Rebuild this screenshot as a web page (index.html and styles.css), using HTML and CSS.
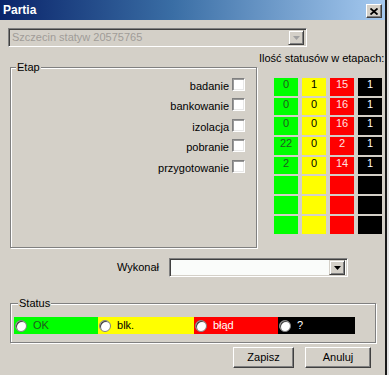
FILE: index.html
```html
<!DOCTYPE html>
<html lang="pl">
<head>
<meta charset="utf-8">
<title>Partia</title>
<link rel="stylesheet" href="styles.css">
</head>
<body>
<div class="screen">
  <div class="dialog">
    <div class="titlebar">
      <span class="title">Partia</span>
      <div class="close">
        <svg width="8" height="7" viewBox="0 0 8 7"><path d="M0.5 0.5 L7.5 6.5 M7.5 0.5 L0.5 6.5" stroke="#000" stroke-width="1.8"/></svg>
      </div>
    </div>
    <div class="content">
      <div class="combo combo-top disabled">
        <span class="combo-text">Szczecin statyw 20575765</span>
        <div class="drop"><svg width="7" height="4" viewBox="0 0 7 4"><path d="M0 0 H7 L3.5 4 Z" fill="#a0a0a0"/></svg></div>
      </div>

      <div class="main">
        <div class="group etap">
          <div class="legend">Etap</div>
          <div class="checks">
            <div class="check-row"><span class="check-label">badanie</span><span class="checkbox"></span></div>
            <div class="check-row"><span class="check-label">bankowanie</span><span class="checkbox"></span></div>
            <div class="check-row"><span class="check-label">izolacja</span><span class="checkbox"></span></div>
            <div class="check-row"><span class="check-label">pobranie</span><span class="checkbox"></span></div>
            <div class="check-row"><span class="check-label">przygotowanie</span><span class="checkbox"></span></div>
          </div>
        </div>
        <div class="right">
          <div class="counts-label">Ilość statusów w etapach:</div>
          <div class="counts">
            <div class="cell g">0</div><div class="cell y">1</div><div class="cell r">15</div><div class="cell k">1</div>
            <div class="cell g">0</div><div class="cell y">0</div><div class="cell r">16</div><div class="cell k">1</div>
            <div class="cell g">0</div><div class="cell y">0</div><div class="cell r">16</div><div class="cell k">1</div>
            <div class="cell g">22</div><div class="cell y">0</div><div class="cell r">2</div><div class="cell k">1</div>
            <div class="cell g">2</div><div class="cell y">0</div><div class="cell r">14</div><div class="cell k">1</div>
            <div class="cell g"></div><div class="cell y"></div><div class="cell r"></div><div class="cell k"></div>
            <div class="cell g"></div><div class="cell y"></div><div class="cell r"></div><div class="cell k"></div>
            <div class="cell g"></div><div class="cell y"></div><div class="cell r"></div><div class="cell k"></div>
          </div>
        </div>
      </div>

      <div class="wyk-row">
        <span class="wyk-label">Wykonał</span>
        <div class="combo combo-wyk">
          <span class="combo-text"></span>
          <div class="drop"><svg width="7" height="4" viewBox="0 0 7 4"><path d="M0 0 H7 L3.5 4 Z" fill="#000"/></svg></div>
        </div>
      </div>

      <div class="group status">
        <div class="legend">Status</div>
        <div class="status-bar">
          <div class="seg seg-ok"><span class="radio"></span><span>OK</span></div>
          <div class="seg seg-blk"><span class="radio"></span><span>blk.</span></div>
          <div class="seg seg-err"><span class="radio"></span><span>błąd</span></div>
          <div class="seg seg-unk"><span class="radio"></span><span>?</span></div>
        </div>
      </div>

      <div class="buttons">
        <div class="btn btn-save">Zapisz</div>
        <div class="btn btn-cancel">Anuluj</div>
      </div>
    </div>
  </div>
  <div class="edge"></div>
</div>
</body>
</html>
```

FILE: styles.css
```css
html, body {
  margin: 0;
  padding: 0;
}
body {
  font-family: "Liberation Sans", Arial, sans-serif;
  font-size: 11px;
  line-height: 13px;
  color: #000;
  background: #d4d0c8;
}
.screen {
  display: flex;
  width: 389px;
  height: 375px;
  overflow: hidden;
}
.dialog {
  width: 385px;
  height: 375px;
  background: #d4d0c8;
  flex: none;
}
.edge {
  flex: 1;
  border-left: 2px solid #1a1a1a;
  background: #e4e4e4;
}

/* title bar */
.titlebar {
  height: 20px;
  display: flex;
  align-items: center;
  justify-content: space-between;
  padding: 0 3px 0 3px;
  background: linear-gradient(to right, #0a246a 0%, #3a6ea5 45%, #a6caf0 100%);
}
.title {
  color: #fff;
  font-weight: bold;
  font-size: 12px;
  line-height: 14px;
}
.close {
  width: 14px;
  height: 12px;
  margin-top: 2px;
  background: #d4d0c8;
  border: 1px solid;
  border-color: #fff #404040 #404040 #fff;
  box-shadow: inset -1px -1px 0 #808080;
  display: flex;
  align-items: center;
  justify-content: center;
}
.close svg { display: block; }

.content {
  padding: 8px 0 0 8px;
}

/* combos */
.combo {
  box-sizing: border-box;
  height: 19px;
  border: 1px solid;
  border-color: #808080 #fff #fff #808080;
  box-shadow: inset 1px 1px 0 #404040, inset -1px -1px 0 #d4d0c8;
  display: flex;
  align-items: center;
  padding: 0 2px 0 3px;
}
.combo-text {
  flex: 1;
}
.combo.disabled {
  background: #d4d0c8;
  color: #a09c98;
}
.combo-top {
  width: 299px;
}
.combo-wyk {
  width: 179px;
  background: #fafcfa;
}
.drop {
  box-sizing: border-box;
  width: 16px;
  height: 15px;
  background: #d4d0c8;
  border: 1px solid;
  border-color: #d4d0c8 #404040 #404040 #d4d0c8;
  box-shadow: inset 1px 1px 0 #fff, inset -1px -1px 0 #808080;
  display: flex;
  align-items: center;
  justify-content: center;
}
.drop svg { display: block; }

/* main row */
.main {
  display: flex;
  margin-top: 5px;
}
.group {
  box-sizing: border-box;
  border: 1px solid #808080;
  box-shadow: inset 1px 1px 0 #fff, 1px 1px 0 #fff;
}
.legend {
  width: fit-content;
  margin-top: -7px;
  padding: 0 1px;
  background: #d4d0c8;
  line-height: 13px;
}
.etap {
  width: 247px;
  height: 181px;
  margin: 15px 0 0 2px;
}
.etap .legend {
  margin-left: 5px;
}
.checks {
  display: flex;
  flex-direction: column;
  align-items: flex-end;
  margin-right: 11px;
}
.check-row {
  height: 20.5px;
  display: flex;
  align-items: center;
  gap: 3px;
}
.check-label {
  margin-top: 4px;
}
.checkbox {
  box-sizing: border-box;
  width: 13px;
  height: 13px;
  background: #fff;
  border: 1px solid;
  border-color: #808080 #fff #fff #808080;
  box-shadow: inset 1px 1px 0 #9a9a9a, inset -1px -1px 0 #e8e8e8;
}

.right {
  margin-left: 2px;
}
.counts-label {
  white-space: nowrap;
}
.counts {
  margin: 13px 0 0 15px;
  display: grid;
  grid-template-columns: repeat(4, 24px);
  grid-template-rows: repeat(8, 17.7px);
  column-gap: 4px;
  row-gap: 2px;
}
.cell {
  text-align: center;
  line-height: 13px;
}
.g { background: #00ff00; color: #1f5a1f; }
.y { background: #ffff00; color: #000; }
.r { background: #ff0000; color: #ffe0e0; }
.k { background: #000; color: #fff; }

/* wykonal */
.wyk-row {
  display: flex;
  align-items: center;
  margin-top: 10px;
}
.wyk-label {
  width: 151px;
  text-align: right;
  margin-right: 10px;
}

/* status */
.status {
  width: 366px;
  margin: 26px 0 0 2px;
}
.status .legend {
  margin-left: 7px;
}
.status-bar {
  display: flex;
  height: 17px;
  margin: 7px 20px 8px 3px;
}
.seg {
  display: flex;
  align-items: center;
  padding-left: 1px;
  gap: 6px;
}
.seg-ok { width: 84px; background: #00ff00; color: #1f5a1f; }
.seg-blk { width: 96px; background: #ffff00; color: #000; }
.seg-err { width: 84px; background: #ff0000; color: #fff; }
.seg-unk { width: 77px; background: #000; color: #fff; }
.radio {
  box-sizing: border-box;
  width: 12px;
  height: 12px;
  border-radius: 50%;
  background: #fff;
  border: 1px solid #808080;
  box-shadow: inset 1px 1px 0 #404040;
}

/* buttons */
.buttons {
  display: flex;
  justify-content: flex-end;
  gap: 11px;
  margin-top: 4px;
  padding-right: 14px;
}
.btn {
  box-sizing: border-box;
  height: 21px;
  background: #d4d0c8;
  border: 1px solid;
  border-color: #fff #404040 #404040 #fff;
  box-shadow: inset -1px -1px 0 #808080;
  display: flex;
  align-items: center;
  justify-content: center;
}
.btn-save { width: 61px; }
.btn-cancel { width: 66px; }
```
